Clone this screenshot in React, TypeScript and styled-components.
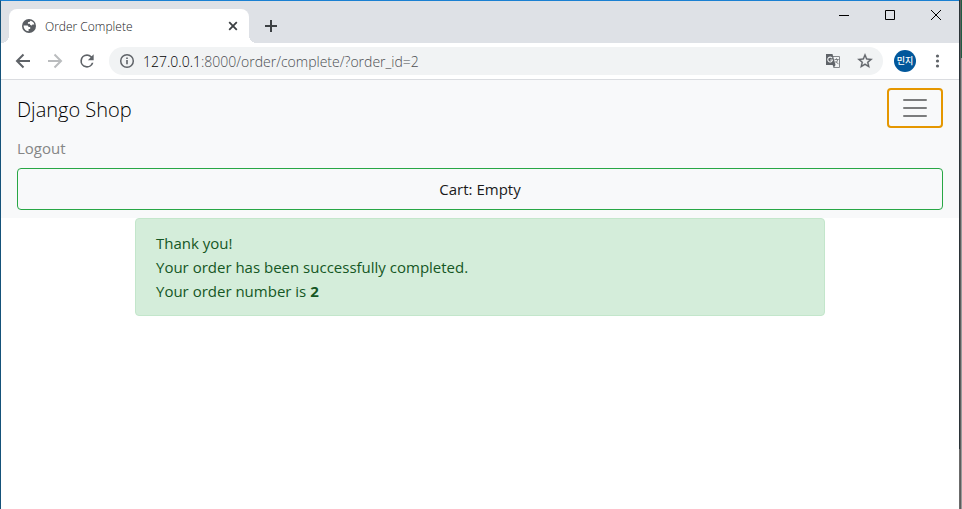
import React from "react";
import styled, { createGlobalStyle } from "styled-components";

const GlobalStyle = createGlobalStyle`
  *, *::before, *::after { box-sizing: border-box; }
  html, body, #root { height: 100%; }
  body { margin: 0; background: #fff; font-family: "Open Sans", "Noto Sans", "Noto Sans CJK KR", sans-serif; }
  button, input { font: inherit; margin: 0; padding: 0; border: 0; background: none; }
  svg { display: block; }
`;

const Desktop = styled.div`
  display: flex;
  min-height: 100%;
`;

const Window = styled.div`
  flex: 1;
  min-width: 0;
  border-top: 1px solid #1a80d2;
  border-left: 1px solid #15527a;
  background: #fff;
`;

const DarkEdge = styled.div`
  width: 1px;
  background: linear-gradient(#2b3338 0 449px, #6b6b6b 449px);
`;

const GreyEdge = styled.div`
  width: 2px;
  background: linear-gradient(#215c42 0 58px, #9a9a9a 58px);
  border-left: 1px solid #5e5e5e;
`;

const TabStrip = styled.div`
  display: flex;
  align-items: flex-end;
  height: 42px;
  padding-left: 8px;
  background: #dee1e6;
`;

const Tab = styled.div`
  position: relative;
  display: flex;
  align-items: center;
  width: 240px;
  height: 34px;
  padding: 0 8px 0 12px;
  border-radius: 8px 8px 0 0;
  background: #fff;
  color: #202124;
  font-size: 12px;
  font-weight: 300;

  &::before, &::after {
    content: "";
    position: absolute;
    bottom: 0;
    width: 8px;
    height: 8px;
  }
  &::before { right: 100%; background: radial-gradient(circle at 0 0, transparent 8px, #fff 8px); }
  &::after { left: 100%; background: radial-gradient(circle at 100% 0, transparent 8px, #fff 8px); }
`;

const TabTitle = styled.span`
  flex: 1;
  margin-left: 8px;
`;

const IconButton = styled.button<{ $w: number; $color?: string }>`
  display: flex;
  flex: none;
  align-items: center;
  justify-content: center;
  width: ${(p) => p.$w}px;
  height: 28px;
  color: ${(p) => p.$color ?? "#5f6368"};
`;

const NewTab = styled(IconButton)`
  height: 34px;
  margin-left: 8px;
`;

const WindowControls = styled.div`
  display: flex;
  align-self: flex-start;
  margin-left: auto;
`;

const Toolbar = styled.div`
  display: flex;
  align-items: center;
  height: 37px;
  padding: 0 6px;
  border-bottom: 1px solid #dadce0;
`;

const Omnibox = styled.div`
  display: flex;
  flex: 1;
  align-items: center;
  min-width: 0;
  height: 28px;
  margin: 0 6px;
  padding: 0 2px;
  border-radius: 14px;
  background: #f1f3f4;
`;

const Address = styled.div`
  flex: 1;
  color: #4b4e52;
  font-size: 14px;
  font-weight: 300;
  white-space: nowrap;
`;

const Host = styled.span`
  color: #000;
`;

const Avatar = styled.button`
  flex: none;
  width: 22px;
  height: 22px;
  margin: 0 5px;
  border-radius: 50%;
  background: #01579b;
  color: #fff;
  font-family: "Noto Sans CJK KR", sans-serif;
  font-size: 9px;
  font-weight: 500;
  line-height: 22px;
`;

const Navbar = styled.nav`
  padding: 8px 16px;
  background: #f8f9fa;
`;

const NavHeader = styled.div`
  display: flex;
  align-items: center;
  justify-content: space-between;
`;

const Brand = styled.a`
  padding-top: 4px;
  color: #000;
  font-size: 20px;
  font-weight: 300;
  line-height: 30px;
  text-decoration: none;
`;

const Toggler = styled.button`
  display: flex;
  align-items: center;
  justify-content: center;
  width: 56px;
  height: 40px;
  border: 2px solid #e59700;
  border-radius: 4px;
`;

const NavLink = styled.a`
  display: block;
  padding: 8px 0;
  color: #858686;
  font-size: 15px;
  line-height: 24px;
  text-decoration: none;
`;

const CartLink = styled.a`
  display: block;
  padding: 8px 12px;
  border: 1px solid #28a745;
  border-radius: 4px;
  color: #1a1a1a;
  font-size: 15px;
  line-height: 24px;
  text-align: center;
  text-decoration: none;
`;

const Container = styled.main`
  max-width: 720px;
  margin: 0 auto;
  padding: 0 15px;
`;

const Alert = styled.div`
  padding: 12px 20px;
  border: 1px solid #c3e6cb;
  border-radius: 4px;
  background: #d4edda;
  color: #155724;
  font-size: 15px;
  line-height: 24px;
`;

const OrderNumber = styled.strong`
  font-weight: 700;
`;

const Globe = () => (
  <svg width="16" height="16" viewBox="0 0 16 16" aria-hidden="true">
    <circle cx="8" cy="8" r="7" fill="#5a5e63" />
    <path d="M2.600 7.600h3.200c1.300 0 1.700.7 1.700 1.500h1.700v1.900H7.600v2.300c-2.900 0-5-2.500-5-5.700zM9.300 2.800c0 1-.7 1.200-1.800 1.200-.6 0-.6 1-.6 1.700h2c0 1.300.8 1.700 2 1.700l.5-.9h1.900c-.3-1.900-1.900-3.400-4-3.700z" fill="#fff" />
  </svg>
);

const Line = ({ d, size = 16, w = 2 }: { d: string; size?: number; w?: number }) => (
  <svg width={size} height={size} viewBox={`0 0 ${size} ${size}`} fill="none" stroke="currentColor" strokeWidth={w} aria-hidden="true">
    <path d={d} />
  </svg>
);

const Reload = () => (
  <svg width="20" height="20" viewBox="0 0 24 24" fill="currentColor" aria-hidden="true">
    <path d="M17.65 6.35A7.96 7.96 0 0 0 12 4a8 8 0 1 0 7.730 10h-2.080A6 6 0 1 1 12 6c1.660 0 3.140.69 4.220 1.780L13 11h7V4z" />
  </svg>
);

const Info = () => (
  <svg width="16" height="16" viewBox="0 0 16 16" fill="none" stroke="currentColor" strokeWidth="1.500" aria-hidden="true">
    <circle cx="8" cy="8" r="6.300" />
    <path d="M8 7v4.300M8 4.500V6" strokeWidth="1.600" />
  </svg>
);

const Translate = () => (
  <svg width="16" height="16" viewBox="0 0 16 16" fill="none" aria-hidden="true">
    <path d="M8 3.500h6.500v11H8.500" stroke="#85888c" />
    <path d="M1 1h6.500l3 11H1z" fill="#5f6368" />
    <path d="M7.600 12l1.200 2.800 1.700-2.800z" fill="#5f6368" />
    <path d="M7.200 5.300A2.400 2.400 0 1 0 7.500 7H5.200" stroke="#f1f3f4" strokeWidth="1.100" />
    <path d="M9.500 6.500h4.200M11.500 5.300v1.200M12.800 6.500c-.3 1.600-1.200 2.700-2.300 3.600M10.500 8l3 3.200" stroke="#74777b" strokeWidth=".9" />
  </svg>
);

const Star = () => (
  <svg width="18" height="18" viewBox="0 0 24 24" fill="currentColor" stroke="currentColor" strokeWidth=".4" aria-hidden="true">
    <path d="M22 9.240l-7.190-.62L12 2 9.190 8.630 2 9.240l5.460 4.730L5.820 21 12 17.270 18.180 21l-1.630-7.030zM12 15.400l-3.760 2.270 1-4.280-3.320-2.880 4.380-.38L12 6.100l1.710 4.040 4.380.38-3.320 2.880 1 4.280z" />
  </svg>
);

const Dots = () => (
  <svg width="16" height="16" viewBox="0 0 16 16" fill="currentColor" aria-hidden="true">
    <circle cx="8.500" cy="3" r="1.600" />
    <circle cx="8.500" cy="8" r="1.600" />
    <circle cx="8.500" cy="13" r="1.600" />
  </svg>
);

const Burger = () => (
  <svg width="30" height="30" viewBox="0 0 30 30" stroke="#7b7c7d" strokeWidth="2" strokeLinecap="round" aria-hidden="true">
    <path d="M4 7h22M4 15h22M4 23h22" />
  </svg>
);

export default function App() {
  return (
    <>
      <GlobalStyle />
      <Desktop>
        <Window>
          <TabStrip>
            <Tab>
              <Globe />
              <TabTitle>Order Complete</TabTitle>
              <IconButton $w={16} $color="#3c4043" aria-label="Close tab">
                <Line d="M4.200 4.200l7.600 7.600M11.800 4.200l-7.600 7.600" w={1.8} />
              </IconButton>
            </Tab>
            <NewTab $w={28} $color="#3c4043" aria-label="New tab">
              <Line d="M8 2v12M2 8h12" />
            </NewTab>
            <WindowControls>
              <IconButton $w={46} $color="#000" aria-label="Minimize">
                <Line d="M0 5.500h10" size={10} w={1} />
              </IconButton>
              <IconButton $w={46} $color="#000" aria-label="Maximize">
                <Line d="M.5.5h9v9h-9z" size={10} w={1} />
              </IconButton>
              <IconButton $w={46} $color="#000" aria-label="Close">
                <Line d="M0 0l10 10M10 0L0 10" size={10} w={1} />
              </IconButton>
            </WindowControls>
          </TabStrip>
          <Toolbar>
            <IconButton $w={32} aria-label="Back">
              <Line d="M15 8H2.500M8.500 1.500L2 8l6.500 6.500" />
            </IconButton>
            <IconButton $w={32} $color="#babcbe" aria-label="Forward">
              <Line d="M1 8h12.500M7.500 1.500L14 8l-6.500 6.500" />
            </IconButton>
            <IconButton $w={32} aria-label="Reload">
              <Reload />
            </IconButton>
            <Omnibox>
              <IconButton $w={32} aria-label="Site information">
                <Info />
              </IconButton>
              <Address>
                <Host>127.0.0.1</Host>:8000/order/complete/?order_id=2
              </Address>
              <IconButton $w={32} aria-label="Translate this page">
                <Translate />
              </IconButton>
              <IconButton $w={32} aria-label="Bookmark this page">
                <Star />
              </IconButton>
            </Omnibox>
            <Avatar aria-label="민지">민지</Avatar>
            <IconButton $w={32} aria-label="Browser menu">
              <Dots />
            </IconButton>
          </Toolbar>
          <Navbar>
            <NavHeader>
              <Brand href="#">Django Shop</Brand>
              <Toggler aria-label="Toggle navigation">
                <Burger />
              </Toggler>
            </NavHeader>
            <NavLink href="#">Logout</NavLink>
            <CartLink href="#">Cart: Empty</CartLink>
          </Navbar>
          <Container>
            <Alert role="alert">
              Thank you!
              <br />
              Your order has been successfully completed.
              <br />
              Your order number is <OrderNumber>2</OrderNumber>
            </Alert>
          </Container>
        </Window>
        <DarkEdge />
        <GreyEdge />
      </Desktop>
    </>
  );
}
